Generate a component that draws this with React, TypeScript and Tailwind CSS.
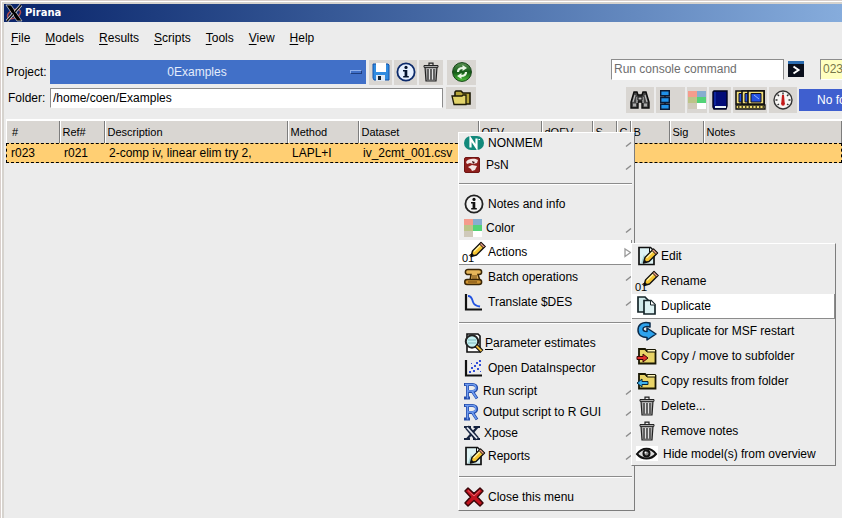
import React, { useState } from "react";

const svgProps = (w: number, h: number) => ({
  width: w,
  height: h,
  viewBox: `0 0 ${w} ${h}`,
  className: "block shrink-0 overflow-visible",
  "aria-hidden": true,
});

const XLogo = () => (
  <svg {...svgProps(16, 16)}>
    <ellipse cx="8" cy="9" rx="7" ry="4" fill="none" stroke="#b04a4a" strokeWidth="1.5" transform="rotate(-25 8 9)" />
    <path d="M0 0h5l11 16h-5z" fill="#000" stroke="#ddd" strokeWidth=".7" />
    <path d="M15 0L9 7M7 9L1 16" stroke="#ddd" strokeWidth="3" />
    <path d="M15 0L9 7M7 9L1 16" stroke="#111" strokeWidth="1.6" />
  </svg>
);

const SaveIcon = () => (
  <svg {...svgProps(18, 18)}>
    <path d="M1 1h15l1 1v15H2l-1-2z" fill="#2f8be0" stroke="#1552a8" />
    <path d="M4 0h10v9H4z" fill="#fff" />
    <path d="M4 12h9v6H4z" fill="#dfe9f5" />
    <path d="M6 13h3v4H6z" fill="#123" />
  </svg>
);

const InfoIcon = ({ blue = false }: { blue?: boolean }) => (
  <svg {...svgProps(20, 20)}>
    <circle cx="10" cy="10" r="8.6" fill={blue ? "#e6f0ff" : "#f4f4f4"} stroke={blue ? "#0c2a6b" : "#222"} strokeWidth="1.8" />
    <circle cx="10" cy="5.4" r="1.6" fill={blue ? "#05142f" : "#111"} />
    <path d="M7 8h4.300v6h1.500v1.500H7.200V14h1.400V9.400H7z" fill={blue ? "#05142f" : "#111"} />
  </svg>
);

const TrashIcon = () => (
  <svg {...svgProps(20, 20)}>
    <path d="M4 5h12l-1 14H5z" fill="#aaa" stroke="#222" strokeWidth="1.2" />
    <path d="M7 7v11M10 7v11M13 7v11" stroke="#333" strokeWidth="1.2" />
    <path d="M8.5 7v10M11.5 7v10" stroke="#eee" strokeWidth=".8" />
    <path d="M3 3.5h14v1.8H3z" fill="#ccc" stroke="#222" />
    <path d="M8 3V1.2h4V3" fill="none" stroke="#222" strokeWidth="1.2" />
  </svg>
);

const RefreshIcon = () => (
  <svg {...svgProps(20, 20)}>
    <defs>
      <linearGradient id="green" x1="0" y1="0" x2="0" y2="1">
        <stop offset="0" stopColor="#5c9455" />
        <stop offset=".5" stopColor="#145a18" />
        <stop offset="1" stopColor="#4fc43c" />
      </linearGradient>
    </defs>
    <circle cx="10" cy="10" r="9.4" fill="url(#green)" stroke="#123f14" />
    <path d="M6 10c0-3 2-4 5-4" fill="none" stroke="#e9f7e4" strokeWidth="2.2" />
    <path d="M10.500 3l4.500 3-4.500 3z" fill="#e9f7e4" />
    <path d="M14 10c0 3-2 4-5 4" fill="none" stroke="#e9f7e4" strokeWidth="2.200" />
    <path d="M9.500 17L5 14l4.500-3z" fill="#e9f7e4" />
  </svg>
);

const FolderIcon = () => (
  <svg {...svgProps(20, 16)}>
    <path d="M4 14V2l1-1h5l2 2h7v11H5z" fill="#b5a43a" stroke="#1c1905" strokeWidth="1.6" />
    <path d="M1 6h10l1-1h3v9.500H3z" fill="#e2d36a" stroke="#1c1905" strokeWidth="1.3" />
  </svg>
);

const TerminalIcon = () => (
  <svg {...svgProps(16, 16)}>
    <path d="M0 0h16v16H0z" fill="#0a0f1c" />
    <path d="M0 0h16v3H0z" fill="#2b6cb0" />
    <path d="M5.500 5.500l5 3.500-5 3.500" fill="none" stroke="#fff" strokeWidth="2" />
  </svg>
);

const BinocularsIcon = () => (
  <svg {...svgProps(20, 20)}>
    <path d="M4 2h3l1 3h4l1-3h3l3 10v6h-7v-6H8v6H1v-6z" fill="#444" stroke="#0c0c0c" strokeWidth="1.4" />
    <path d="M5 5L3 12M15 5l2 7M7 7v6M13 7v6" stroke="#bbb" strokeWidth="1.2" />
    <path d="M3 13.500h3v3H3zM14 13.500h3v3h-3z" fill="#aaa" />
    <path d="M8 7h4v3H8z" fill="#bbb" stroke="#111" />
  </svg>
);

const TreeIcon = () => (
  <svg {...svgProps(10, 20)}>
    <path d="M5 4v13" stroke="#111" strokeWidth="1.500" />
    <path d="M.7 .7h8.600v5H.7zM.7 7.500h8.600v5H.7zM.7 14.300h8.600v5H.7z" fill="#2090e8" stroke="#0a1a35" strokeWidth="1.400" />
  </svg>
);

const ColorIcon = () => (
  <svg {...svgProps(18, 18)}>
    <path d="M0 0h9v6H0z" fill="#f59c8c" />
    <path d="M9 0h9v6H9z" fill="#86aed0" />
    <path d="M0 6h9v6H0z" fill="#bcc488" />
    <path d="M9 6h9v6H9z" fill="#52d377" />
    <path d="M0 12h9v6H0z" fill="#cfc9ba" />
    <path d="M9 12h9v6H9z" fill="#fff" />
  </svg>
);

const BookIcon = () => (
  <svg {...svgProps(16, 20)}>
    <path d="M2 1h13v15l-1 3H2L1 17V2z" fill="#020c78" stroke="#02041f" strokeWidth="1.400" />
    <path d="M3 16h11v2H3z" fill="#e8f2f6" />
    <path d="M3 2v13" stroke="#1d3fc0" />
  </svg>
);

const ScreensIcon = () => (
  <svg {...svgProps(31, 20)}>
    {[1, 7, 13].map((x) => (
      <g key={x}>
        <path d={`M${x} 1h${29 - x}v13H${x}z`} fill="#f2df7a" stroke="#111" strokeWidth="1.600" />
        <path d={`M${x + 3} 3.500H26V12H${x + 3}z`} fill="#2450e0" stroke="#112" />
      </g>
    ))}
    <path d="M1 15h29v4H1z" fill="#f0dc70" stroke="#111" strokeWidth="1.300" />
    <path d="M3 17h26" stroke="#111" strokeWidth="1.400" strokeDasharray="1.500 2" />
    <path d="M19 5l5 4" stroke="#8fb4ff" />
  </svg>
);

const GaugeIcon = () => (
  <svg {...svgProps(20, 20)}>
    <circle cx="10" cy="10" r="9" fill="#f7f5f3" stroke="#333" strokeWidth="1.400" />
    <path d="M10 2.500v2M4.500 4.500l1.500 1.500M15.500 4.500L14 6M2.500 10h2M15.500 10h2M4.500 15l1.500-1M15.500 15L14 14" stroke="#333" strokeWidth="1.400" />
    <path d="M9 5h2l.8 9H8.200z" fill="#c41a1a" />
    <circle cx="10" cy="14" r="1.800" fill="#c41a1a" />
  </svg>
);

const NonmemIcon = () => (
  <svg {...svgProps(20, 16)}>
    <rect x="0" y="1" width="20" height="14" rx="7" fill="#12897b" />
    <path d="M6.500 12.500v-9l6 9v-9" fill="none" stroke="#fff" strokeWidth="2.200" />
    <path d="M14.500 4.500h1.500" stroke="#fff" />
  </svg>
);

const PsnIcon = () => (
  <svg {...svgProps(18, 16)}>
    <rect x=".5" y=".5" width="15" height="15" rx="1.500" fill="#8f1f1c" stroke="#6f1513" />
    <path d="M2 5c2-4 9-4 12-2l-1 3-4 1-3-1-3 1z" fill="#f3e6e4" />
    <path d="M4 10l4-2 5 1-2 4-3 1-1-2z" fill="#f3e6e4" />
    <path d="M8 4l3 1-2 2z" fill="#3d0e0d" />
  </svg>
);

const PencilBody = () => (
  <>
    <path d="M0 0l1.500-5.500L10-14l4 4-8.500 8.500z" fill="#f6c531" stroke="#111" strokeWidth="1.400" strokeLinejoin="round" />
    <path d="M3 -5L11 -13" stroke="#fff3a8" strokeWidth="1.300" />
    <path d="M8.500 -12.500L10 -14l4 4-1.500 1.500z" fill="#ef9d86" stroke="#111" />
    <path d="M0 0l1-3.500L3.500 -1z" fill="#111" />
  </>
);

const RenameIcon = () => (
  <svg {...svgProps(20, 20)}>
    <g transform="translate(7 14.500)">
      <PencilBody />
    </g>
    <text x="-2" y="20" fontSize="11" fill="#000">01</text>
  </svg>
);

const EditIcon = () => (
  <svg {...svgProps(20, 20)}>
    <path d="M2 1.500h11.500L17 5v13.500H2z" fill="#def3f4" stroke="#111" strokeWidth="1.700" />
    <path d="M12.500 2v4H17" fill="#fff" stroke="#111" />
    <path d="M4 17l3-9 3 9z" fill="#a9d5d8" />
    <g transform="translate(6.500 17)">
      <PencilBody />
    </g>
  </svg>
);

const ScrollIcon = () => (
  <svg {...svgProps(20, 18)}>
    <path d="M4 1.500h11c3.500 0 3.500 5 0 5h-1l2 6H6l1-6H3c-2.500-1-2-5 1-5z" fill="#e6b65a" stroke="#3a2606" strokeWidth="1.500" />
    <path d="M3 11.500h12c3.500 0 3.500 5 0 5H3c-3 0-3-5 0-5z" fill="#cf9433" stroke="#3a2606" strokeWidth="1.500" />
    <path d="M8 8h5M8 10h5M4 14h9" stroke="#6d450e" />
  </svg>
);

const CurveIcon = () => (
  <svg {...svgProps(20, 18)}>
    <path d="M2 1v15.500h16" fill="none" stroke="#111" strokeWidth="2.200" />
    <path d="M4 3c4 0 4 3 5 6s3 4 7 4.500" fill="none" stroke="#2353e0" strokeWidth="1.800" />
  </svg>
);

const ScatterIcon = () => (
  <svg {...svgProps(20, 18)}>
    <path d="M2 1v15.500h16" fill="none" stroke="#111" strokeWidth="2.200" />
    <path
      d="M5 12h2v2H5zM7 8h2v2H7zM9 11h2v2H9zM10 6h2v2h-2zM13 9h2v2h-2zM12 3h2v2h-2zM15 5h2v2h-2zM15 1h2v2h-2zM7 4h1v1H7zM16 12h1v1h-1z"
      fill="#3450d8"
    />
  </svg>
);

const MagnifyIcon = () => (
  <svg {...svgProps(17, 20)}>
    <path d="M3 1h11l2 2v16H3z" fill="#fff" stroke="#111" strokeWidth="1.600" />
    <circle cx="8" cy="8.500" r="6.200" fill="#c4f0f1" stroke="#222" strokeWidth="2" />
    <path d="M4 7h8M4 10h8" stroke="#7fb8bb" />
    <path d="M12 12.500l6 6" stroke="#111" strokeWidth="4" />
    <path d="M12.500 13l5 5" stroke="#e9b83a" strokeWidth="1.800" />
  </svg>
);

const RIcon = () => (
  <svg {...svgProps(15, 16)}>
    <path d="M0 1.500h8.500c5.500 0 5.500 7 0 7H3M3.500 1v15M0 15h6M8 8l5 7.500" fill="none" stroke="#234aa8" strokeWidth="3" />
    <path d="M1 1.500h7.500c4.500 0 4.500 6.500 0 6.500H3M3.500 1v14.500M8 8l4.500 7" fill="none" stroke="#6f9cf0" strokeWidth="1.500" />
  </svg>
);

const XposeIcon = () => (
  <svg {...svgProps(16, 14)}>
    <path d="M0 1h7M9.500 1H16M0 13h6M9 13h7" stroke="#16233f" strokeWidth="1.800" />
    <path d="M3 1l10 12" stroke="#16233f" strokeWidth="5" />
    <path d="M13.500 1L3 13" stroke="#16233f" strokeWidth="2.200" />
    <path d="M3 1.500l10 11" stroke="#e8edf5" strokeWidth="1.800" />
  </svg>
);

const CloseIcon = () => (
  <svg {...svgProps(20, 20)}>
    <path
      d="M4 1l6 5.500L16 1l3 3-5.500 6 5.500 6-3 3-6-5.500L4 19l-3-3 5.500-6L1 4z"
      fill="#c3141f"
      stroke="#3a0508"
      strokeWidth="1.500"
      strokeLinejoin="round"
    />
    <path d="M4 3.500l6 5.500 6-5.500" fill="none" stroke="#e86a70" />
  </svg>
);

const DuplicateIcon = () => (
  <svg {...svgProps(20, 20)}>
    <path d="M1 1h7l3 3v12H1z" fill="#cfe9ea" stroke="#16262a" strokeWidth="1.700" />
    <path d="M7 4.500h7l4 4V18H7z" fill="#def3f4" stroke="#16262a" strokeWidth="1.700" />
    <path d="M13.500 4.500V9H18" fill="#fff" stroke="#16262a" />
  </svg>
);

const RestartIcon = () => (
  <svg {...svgProps(20, 20)}>
    <path
      d="M13 2C5 0 1 4 1 9c0 5 4 7.500 9 7.500V19l9-6-9-6v3.500c-3 0-4-1-4-2.500 0-2 3-3 7-2z"
      fill="#2da3ee"
      stroke="#0a2a4a"
      strokeWidth="1.500"
      strokeLinejoin="round"
    />
  </svg>
);

const FolderArrow = ({ left = false }: { left?: boolean }) => (
  <svg {...svgProps(20, 18)}>
    <path d="M2 2h6l2 2h8.500v12.500H2z" fill="#e9d467" stroke="#191703" strokeWidth="1.800" />
    <path d="M10 2.500h8.500V5H10z" fill="#fff6b8" stroke="#191703" />
    {left ? (
      <path d="M0 11l5-4v2.500h6v3H5V15z" fill="#3db2f0" stroke="#06263c" />
    ) : (
      <path d="M11 11L6 7v2.500H0v3h6V15z" fill="#e0302b" stroke="#3c0606" />
    )}
  </svg>
);

const EyeIcon = () => (
  <svg {...svgProps(22, 16)}>
    <path d="M-1 0h22v15H-1z" fill="#fff" />
    <path d="M0 8c5-7 14-7 19 0-5 6-14 6-19 0z" fill="#ddd" stroke="#111" strokeWidth="2" />
    <circle cx="9.500" cy="7.500" r="4" fill="#111" />
    <circle cx="9.500" cy="7.500" r="2" fill="#888" />
    <circle cx="8.500" cy="6.500" r="1" fill="#fff" />
  </svg>
);

const SubmenuArrow = ({ open = false }: { open?: boolean }) => (
  <svg {...svgProps(7, 9)}>
    {open ? (
      <path d="M1 8.500V1l5.500 3.500z" fill="none" stroke="#9a9a9a" strokeWidth="1.300" />
    ) : (
      <path d="M1 8.500l5-4" fill="none" stroke="#8a8a8a" strokeWidth="1.400" />
    )}
  </svg>
);

type Item = {
  label: string;
  icon: React.ReactNode;
  height: string;
  sub?: boolean;
  active?: boolean;
  mnemonic?: boolean;
};

const Mnemonic = ({ text }: { text: string }) => (
  <>
    <span className="underline underline-offset-2">{text[0]}</span>
    {text.slice(1)}
  </>
);

const MenuItem = ({ item }: { item: Item }) => (
  <button
    type="button"
    role="menuitem"
    aria-haspopup={item.sub ? "menu" : undefined}
    className={`flex w-full shrink-0 items-center gap-1 whitespace-nowrap pl-[5px] text-left ${item.height} ${
      item.active ? "border-b border-r border-[#8c8c8c] bg-white" : ""
    }`}
  >
    {item.icon}
    <span className="flex-1">
      {item.mnemonic ? <Mnemonic text={item.label} /> : item.label}
    </span>
    {item.sub && <SubmenuArrow open={item.active} />}
  </button>
);

const Separator = () => (
  <div role="separator" className="flex h-4 items-center">
    <div className="h-0.5 w-full border-b border-t border-b-white border-t-[#8c8c8c]" />
  </div>
);

const tall = "h-[25px] pb-0.5";
const short = "h-[21px] pb-0.5";

const contextMenu: (Item | null)[] = [
  { label: "NONMEM", icon: <NonmemIcon />, height: short, sub: true },
  { label: "PsN", icon: <PsnIcon />, height: "h-[22px]", sub: true },
  null,
  { label: "Notes and info", icon: <InfoIcon />, height: "h-6" },
  { label: "Color", icon: <ColorIcon />, height: "h-6", sub: true },
  { label: "Actions", icon: <RenameIcon />, height: "h-[25px]", sub: true, active: true },
  { label: "Batch operations", icon: <ScrollIcon />, height: tall, sub: true },
  { label: "Translate $DES", icon: <CurveIcon />, height: tall, sub: true },
  null,
  { label: "Parameter estimates", icon: <MagnifyIcon />, height: tall, mnemonic: true },
  { label: "Open DataInspector", icon: <ScatterIcon />, height: tall },
  { label: "Run script", icon: <RIcon />, height: short, sub: true },
  { label: "Output script to R GUI", icon: <RIcon />, height: short, sub: true },
  { label: "Xpose", icon: <XposeIcon />, height: short, sub: true },
  { label: "Reports", icon: <EditIcon />, height: tall, sub: true },
  null,
  { label: "Close this menu", icon: <CloseIcon />, height: tall },
];

const actionsMenu: Item[] = [
  { label: "Edit", icon: <EditIcon />, height: tall },
  { label: "Rename", icon: <RenameIcon />, height: tall },
  { label: "Duplicate", icon: <DuplicateIcon />, height: "h-[25px]", active: true },
  { label: "Duplicate for MSF restart", icon: <RestartIcon />, height: tall },
  { label: "Copy / move to subfolder", icon: <FolderArrow />, height: tall },
  { label: "Copy results from folder", icon: <FolderArrow left />, height: tall },
  { label: "Delete...", icon: <TrashIcon />, height: tall },
  { label: "Remove notes", icon: <TrashIcon />, height: tall },
  { label: "Hide model(s) from overview", icon: <EyeIcon />, height: short },
];

const ToolButton = ({ label, size, children }: { label: string; size: string; children: React.ReactNode }) => (
  <button type="button" aria-label={label} className={`flex shrink-0 items-center justify-center bg-[#d9d6d2] ${size}`}>
    {children}
  </button>
);

const columns = [
  { name: "#", width: "w-[53px] pl-1.5", value: "r023" },
  { name: "Ref#", width: "w-[45px] pl-[3px]", value: "r021" },
  { name: "Description", width: "w-[183px] pl-[3px]", value: "2-comp iv, linear elim try 2," },
  { name: "Method", width: "w-[71px] pl-[3px]", value: "LAPL+I" },
  { name: "Dataset", width: "w-[120px] pl-[3px]", value: "iv_2cmt_001.csv" },
  { name: "OFV", width: "w-[63px] pl-[3px]", value: "" },
  { name: "dOFV", width: "w-[51px] pl-[3px]", value: "" },
  { name: "S", width: "w-6 pl-[3px]", value: "" },
  { name: "C", width: "w-[14px] pl-[3px]", value: "" },
  { name: "B", width: "w-[39px] pl-[3px]", value: "" },
  { name: "Sig", width: "w-[34px] pl-[3px]", value: "" },
  { name: "Notes", width: "pl-[3px]", value: "" },
];

const menus = ["File", "Models", "Results", "Scripts", "Tools", "View", "Help"];

const sunken = "border border-b-white border-l-[#8c8c8c] border-r-[#8c8c8c] border-t-[#8c8c8c]";

export default function App() {
  const [folder, setFolder] = useState("/home/coen/Examples");
  const [code, setCode] = useState("023");

  return (
    <div className="relative min-h-screen w-full overflow-hidden bg-[#d6d3ce] pl-1 pt-1 font-['Liberation_Sans',Arial,sans-serif] text-xs text-black shadow-[inset_1px_1px_0_#d9cfcb,inset_2px_2px_0_#fff]">
      <div className="min-h-[514px] bg-[#ececec]">
        <header className="flex h-[18px] items-center gap-[3px] bg-linear-to-r from-[#0a246a] to-[#86acdc] pl-0.5">
          <XLogo />
          <h1 className="font-['DejaVu_Sans',sans-serif] text-[10px] font-bold text-white">Pirana</h1>
        </header>

        <nav aria-label="Main menu" className="flex h-8 items-center gap-[15px] pl-[7px]">
          {menus.map((m) => (
            <button key={m} type="button">
              <Mnemonic text={m} />
            </button>
          ))}
        </nav>

        <div className="flex h-[65px] items-start gap-[135px] pt-[5px]">
          <div className="flex w-[472px] shrink-0 flex-col gap-0.5">
            <div className="flex h-[26px] items-center">
              <label htmlFor="project" className="w-[46px] pl-0.5">Project:</label>
              <div className="relative mr-[3px] h-6 flex-1">
                <select
                  id="project"
                  className="h-full w-full appearance-none bg-[#4170c8] pr-[22px] text-center text-[#e4ecfb]"
                >
                  <option>0Examples</option>
                </select>
                <span className="pointer-events-none absolute right-1 top-2.5 h-1 w-3 border border-b-[#1f3f80] border-l-[#8fb0ec] border-r-[#1f3f80] border-t-[#8fb0ec]" />
              </div>
              <div className="flex gap-0.5">
                <ToolButton label="Save" size="h-[25px] w-[23px]"><SaveIcon /></ToolButton>
                <ToolButton label="Info" size="h-[25px] w-[23px]"><InfoIcon blue /></ToolButton>
                <ToolButton label="Delete" size="h-[25px] w-6"><TrashIcon /></ToolButton>
                <ToolButton label="Refresh" size="ml-0.5 h-[25px] w-[29px]"><RefreshIcon /></ToolButton>
              </div>
            </div>
            <div className="flex h-[22px] items-center">
              <label htmlFor="folder" className="w-[46px] pl-1">Folder:</label>
              <input
                id="folder"
                value={folder}
                onChange={(e) => setFolder(e.target.value)}
                className={`mr-[3px] h-5 min-w-0 flex-1 bg-white px-0.5 ${sunken}`}
              />
              <ToolButton label="Open folder" size="h-[22px] w-[30px]"><FolderIcon /></ToolButton>
            </div>
          </div>

          <div className="flex shrink-0 flex-col gap-2">
            <div className="flex h-5 items-center">
              <input
                aria-label="Console command"
                placeholder="Run console command"
                className={`h-[21px] w-[173px] bg-white px-0.5 placeholder:text-[#6e6e6e] ${sunken}`}
              />
              <button type="button" aria-label="Run" className="ml-1"><TerminalIcon /></button>
              <input
                aria-label="Model number"
                value={code}
                onChange={(e) => setCode(e.target.value)}
                className={`ml-4 h-[21px] w-[120px] bg-[#ffffc0] px-0.5 text-[#77774a] ${sunken}`}
              />
            </div>
            <div className="ml-[15px] flex items-center gap-0.5">
              <ToolButton label="Search" size="h-[26px] w-7"><BinocularsIcon /></ToolButton>
              <button type="button" aria-label="Tree view" className="flex h-[26px] w-[29px] items-center bg-[#d9d6d2] pl-1">
                <TreeIcon />
              </button>
              <ToolButton label="Colors" size="h-[26px] w-5"><ColorIcon /></ToolButton>
              <ToolButton label="Notebook" size="h-[26px] w-[22px]"><BookIcon /></ToolButton>
              <ToolButton label="Cluster" size="h-[26px] w-[34px]"><ScreensIcon /></ToolButton>
              <ToolButton label="Performance" size="h-[26px] w-7"><GaugeIcon /></ToolButton>
              <button type="button" className="h-[22px] w-[150px] bg-[#3f5fcf] pl-[18px] text-left text-white">
                No folder
              </button>
            </div>
          </div>
        </div>

        <main className="pl-0.5">
          <table className="w-full table-fixed border-collapse text-left">
            <thead>
              <tr className="h-[23px] border-t-2 border-white bg-[#d9d6d2] text-[11px]">
                {columns.map((c) => (
                  <th
                    key={c.name}
                    scope="col"
                    className={`overflow-hidden whitespace-nowrap border-r border-[#7d7d7d] font-normal shadow-[inset_1px_0_0_#fff] ${c.width}`}
                  >
                    {c.name}
                  </th>
                ))}
              </tr>
            </thead>
            <tbody>
              <tr className="h-5 bg-[#ffcf73] outline-1 -outline-offset-1 outline-dashed outline-black">
                {columns.map((c) => (
                  <td key={c.name} className="whitespace-nowrap pl-[5px]">{c.value}</td>
                ))}
              </tr>
            </tbody>
          </table>
        </main>
      </div>

      <div
        role="menu"
        aria-label="Model"
        className="absolute left-[458px] top-[132px] w-[177px] border border-b-[#7d7d7d] border-l-white border-r-[#7d7d7d] border-t-white bg-[#ececec] pr-0.5"
      >
        {contextMenu.map((item, i) => (item ? <MenuItem key={i} item={item} /> : <Separator key={i} />))}
      </div>

      <div
        role="menu"
        aria-label="Actions"
        className="absolute left-[631px] top-[243px] w-[205px] border border-b-[#7d7d7d] border-l-white border-r-[#7d7d7d] border-t-white bg-[#ececec]"
      >
        {actionsMenu.map((item) => (
          <MenuItem key={item.label} item={item} />
        ))}
      </div>
    </div>
  );
}
